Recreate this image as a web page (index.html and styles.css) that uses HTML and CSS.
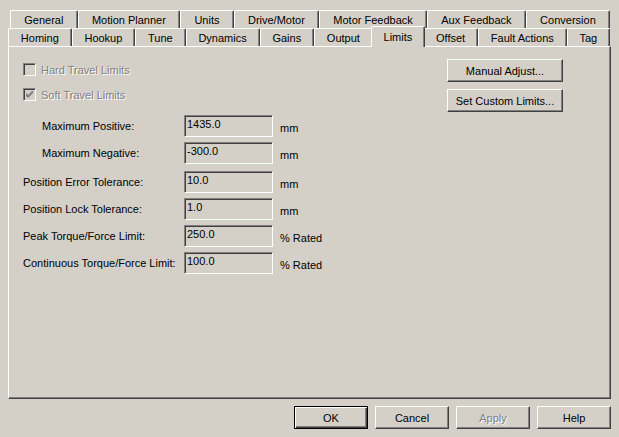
FILE: index.html
```html
<!DOCTYPE html>
<html lang="en">
<head>
  <meta charset="UTF-8" />
  <title>Axis Properties - Limits</title>
  <link rel="stylesheet" href="styles.css">
</head>
<body>

  <div class="dialog">
    <div class="tabs">
      <div class="tab-row back">
        <div class="tab">General</div>
        <div class="tab">Motion Planner</div>
        <div class="tab">Units</div>
        <div class="tab">Drive/Motor</div>
        <div class="tab">Motor Feedback</div>
        <div class="tab">Aux Feedback</div>
        <div class="tab">Conversion</div>
      </div>
      <div class="tab-row front">
        <div class="tab">Homing</div>
        <div class="tab">Hookup</div>
        <div class="tab">Tune</div>
        <div class="tab">Dynamics</div>
        <div class="tab">Gains</div>
        <div class="tab">Output</div>
        <div class="tab active">Limits</div>
        <div class="tab">Offset</div>
        <div class="tab">Fault Actions</div>
        <div class="tab">Tag</div>
      </div>
    </div>

    <div class="panel">
      <div class="panel-left">
        <label class="check disabled">
          <span class="box"></span>
          <span class="txt">Hard Travel Limits</span>
        </label>
        <label class="check disabled">
          <span class="box">
            <svg width="7" height="7" viewBox="0 0 7 7"><path d="M0 2v3l2 2 5-5V-1L2 4z" fill="#808080"/></svg>
          </span>
          <span class="txt">Soft Travel Limits</span>
        </label>

        <div class="fields">
          <div class="field indent">
            <span class="lbl">Maximum Positive:</span>
            <span class="input">1435.0</span>
            <span class="unit">mm</span>
          </div>
          <div class="field indent">
            <span class="lbl">Maximum Negative:</span>
            <span class="input">-300.0</span>
            <span class="unit">mm</span>
          </div>
          <div class="field gap-top">
            <span class="lbl">Position Error Tolerance:</span>
            <span class="input">10.0</span>
            <span class="unit">mm</span>
          </div>
          <div class="field">
            <span class="lbl">Position Lock Tolerance:</span>
            <span class="input">1.0</span>
            <span class="unit">mm</span>
          </div>
          <div class="field">
            <span class="lbl">Peak Torque/Force Limit:</span>
            <span class="input">250.0</span>
            <span class="unit">% Rated</span>
          </div>
          <div class="field">
            <span class="lbl">Continuous Torque/Force Limit:</span>
            <span class="input">100.0</span>
            <span class="unit">% Rated</span>
          </div>
        </div>
      </div>

      <div class="panel-right">
        <button class="btn wide">Manual Adjust...</button>
        <button class="btn wide">Set Custom Limits...</button>
      </div>
    </div>

    <div class="footer">
      <button class="btn default">OK</button>
      <button class="btn">Cancel</button>
      <button class="btn" disabled>Apply</button>
      <button class="btn">Help</button>
    </div>
  </div>

</body>
</html>
```

FILE: styles.css
```css
* {
  box-sizing: border-box;
  margin: 0;
  padding: 0;
}
body {
  font-family: 'Liberation Sans', Arial, sans-serif;
  font-size: 11px;
  color: #000;
  background: #d4d0c8;
}

.dialog {
  width: 619px;
  height: 437px;
  display: flex;
  flex-direction: column;
  padding-top: 10px;
}

/* Tabs */
.tabs {
  padding: 0 9px 0 8px;
}
.tab-row {
  display: flex;
  height: 18px;
}
.tab-row.back {
  margin-left: 2px;
}
.tab {
  flex: 1 1 auto;
  display: flex;
  align-items: center;
  justify-content: center;
  white-space: nowrap;
  background: #d4d0c8;
  border-top: 1px solid #fff;
  border-left: 1px solid #fff;
  border-right: 1px solid #404040;
  border-radius: 2px 2px 0 0;
  box-shadow: inset -1px 0 #808080;
  padding-top: 1px;
}
.tab.active {
  z-index: 1;
  margin: -2px -2px -1px;
  padding-bottom: 2px;
}

/* Panel */
.panel {
  flex: 1;
  margin: 0 8px 0 8px;
  border-top: 1px solid #fff;
  border-left: 1px solid #fff;
  border-right: 1px solid #404040;
  border-bottom: 1px solid #404040;
  box-shadow: inset -1px -1px #808080;
  display: flex;
  justify-content: space-between;
  align-items: flex-start;
  padding: 12px 47px 0 14px;
}
.panel-left {
  margin-top: 4px;
  display: flex;
  flex-direction: column;
}
.panel-right {
  display: flex;
  flex-direction: column;
  gap: 7px;
}

/* Checkboxes */
.check {
  display: flex;
  align-items: center;
  height: 13px;
  margin-bottom: 12px;
}
.check .box {
  width: 13px;
  height: 13px;
  border-top: 1px solid #808080;
  border-left: 1px solid #808080;
  border-right: 1px solid #fff;
  border-bottom: 1px solid #fff;
  box-shadow: inset 1px 1px #404040, inset -1px -1px #d4d0c8;
  background: #d4d0c8;
  display: flex;
  align-items: center;
  justify-content: center;
  margin-right: 5px;
}
.check.disabled .txt {
  color: #808080;
  text-shadow: 1px 1px #fff;
}

/* Fields */
.fields {
  margin-top: 2px;
  display: flex;
  flex-direction: column;
  gap: 5px;
}
.field {
  display: grid;
  grid-template-columns: 154px 89px auto;
  column-gap: 7px;
  align-items: center;
  height: 22px;
}
.field .lbl {
  white-space: nowrap;
}
.field.indent .lbl {
  padding-left: 19px;
}
.field.gap-top {
  margin-top: 2px;
}
.input {
  height: 22px;
  border-top: 1px solid #808080;
  border-left: 1px solid #808080;
  border-right: 1px solid #fff;
  border-bottom: 1px solid #fff;
  box-shadow: inset 1px 1px #404040, inset -1px -1px #d4d0c8;
  padding: 2px 0 0 2px;
  line-height: 13px;
}
.unit {
  padding-top: 4px;
}

/* Buttons */
.btn {
  font-family: inherit;
  font-size: 11px;
  color: #000;
  background: #d4d0c8;
  width: 74px;
  height: 23px;
  border-top: 1px solid #fff;
  border-left: 1px solid #fff;
  border-right: 1px solid #404040;
  border-bottom: 1px solid #404040;
  box-shadow: inset -1px -1px #808080;
}
.btn.wide {
  width: 116px;
}
.btn.default {
  border: 1px solid #000;
  box-shadow: inset 1px 1px #fff, inset -1px -1px #404040, inset -2px -2px #808080;
}
.btn:disabled {
  color: #808080;
  text-shadow: 1px 1px #fff;
}

.footer {
  display: flex;
  justify-content: flex-end;
  gap: 7px;
  padding: 7px 8px 8px 0;
}
```
